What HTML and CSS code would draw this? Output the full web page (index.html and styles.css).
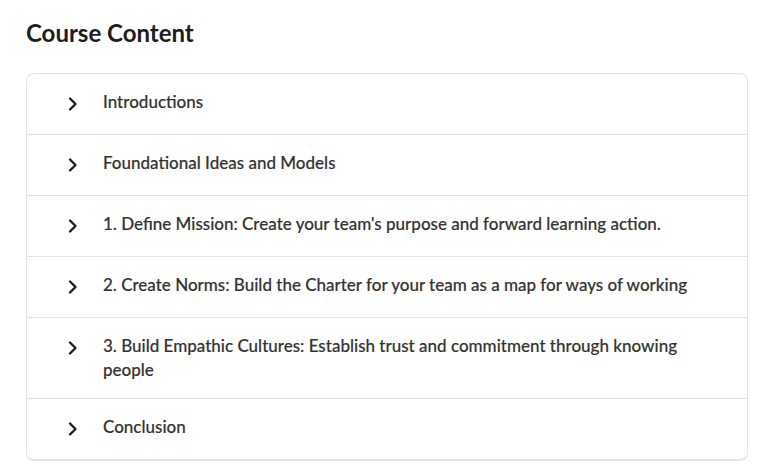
FILE: index.html
```html
<!DOCTYPE html>
<html lang="en">
<head>
<meta charset="utf-8">
<title>Course Content</title>
<link rel="stylesheet" href="styles.css">
</head>
<body>
<main class="page">
  <h2 class="title">Course Content</h2>
  <div class="card">
    <div class="row">
      <span class="chev"><svg width="12" height="16" viewBox="0 0 12 16"><path d="M3 2.5l5.5 5.5L3 13.5" fill="none" stroke="#1f1f1f" stroke-width="2.4" stroke-linecap="round" stroke-linejoin="round"/></svg></span>
      <span class="label">Introductions</span>
    </div>
    <div class="row">
      <span class="chev"><svg width="12" height="16" viewBox="0 0 12 16"><path d="M3 2.5l5.5 5.5L3 13.5" fill="none" stroke="#1f1f1f" stroke-width="2.4" stroke-linecap="round" stroke-linejoin="round"/></svg></span>
      <span class="label">Foundational Ideas and Models</span>
    </div>
    <div class="row">
      <span class="chev"><svg width="12" height="16" viewBox="0 0 12 16"><path d="M3 2.5l5.5 5.5L3 13.5" fill="none" stroke="#1f1f1f" stroke-width="2.4" stroke-linecap="round" stroke-linejoin="round"/></svg></span>
      <span class="label">1. Define Mission: Create your team's purpose and forward learning action.</span>
    </div>
    <div class="row">
      <span class="chev"><svg width="12" height="16" viewBox="0 0 12 16"><path d="M3 2.5l5.5 5.5L3 13.5" fill="none" stroke="#1f1f1f" stroke-width="2.4" stroke-linecap="round" stroke-linejoin="round"/></svg></span>
      <span class="label">2. Create Norms: Build the Charter for your team as a map for ways of working</span>
    </div>
    <div class="row">
      <span class="chev"><svg width="12" height="16" viewBox="0 0 12 16"><path d="M3 2.5l5.5 5.5L3 13.5" fill="none" stroke="#1f1f1f" stroke-width="2.4" stroke-linecap="round" stroke-linejoin="round"/></svg></span>
      <span class="label">3. Build Empathic Cultures: Establish trust and commitment through knowing people</span>
    </div>
    <div class="row">
      <span class="chev"><svg width="12" height="16" viewBox="0 0 12 16"><path d="M3 2.5l5.5 5.5L3 13.5" fill="none" stroke="#1f1f1f" stroke-width="2.4" stroke-linecap="round" stroke-linejoin="round"/></svg></span>
      <span class="label">Conclusion</span>
    </div>
  </div>
</main>
</body>
</html>
```

FILE: styles.css
```css
html, body {
  margin: 0;
  padding: 0;
  background: #ffffff;
}
body {
  font-family: "Lato", "Noto Sans", sans-serif;
  color: #333333;
}
.page {
  padding: 17px 16px 0 26px;
}
.title {
  margin: 0 0 24px 0;
  font-size: 24px;
  line-height: 32px;
  font-weight: 700;
  color: #1c1d1f;
}
.card {
  width: 720px;
  border: 1px solid #e4e4e4;
  border-bottom-width: 2px;
  border-radius: 8px;
  background: #fff;
  overflow: hidden;
}
.row {
  display: flex;
  align-items: flex-start;
  gap: 24px;
  padding: 16px 40px 16px 40px;
  border-top: 1px solid #e4e4e4;
}
.row:first-child {
  border-top: none;
}
.chev {
  flex: none;
  width: 12px;
  height: 28px;
  display: flex;
  align-items: center;
}
.label {
  font-size: 17px;
  line-height: 24px;
  font-weight: 500;
  -webkit-text-stroke: 0.15px #333333;
}
```
